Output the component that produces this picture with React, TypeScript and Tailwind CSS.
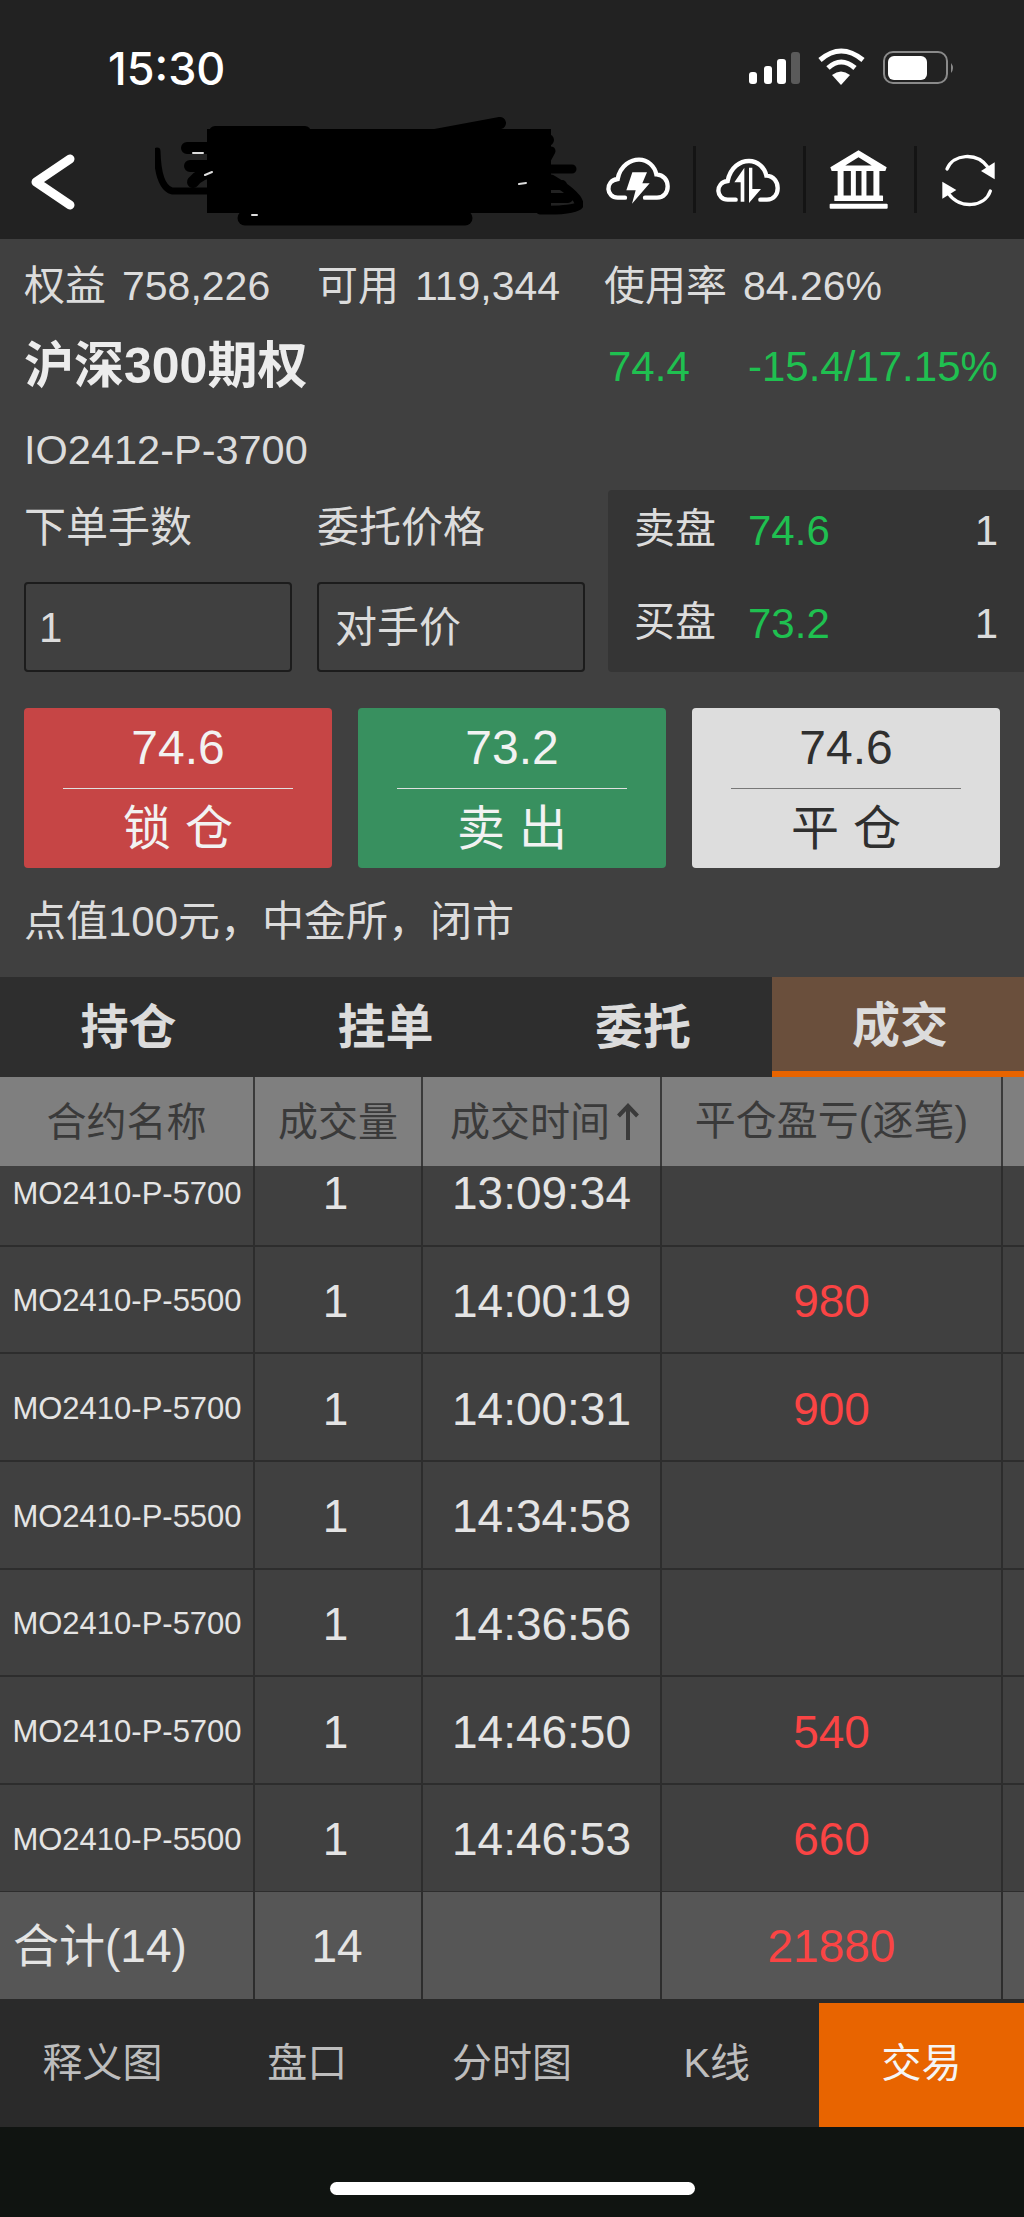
const fills = [
  { name: "MO2410-P-5700", time: "13:09:34", pnl: "" },
  { name: "MO2410-P-5500", time: "14:00:19", pnl: "980" },
  { name: "MO2410-P-5700", time: "14:00:31", pnl: "900" },
  { name: "MO2410-P-5500", time: "14:34:58", pnl: "" },
  { name: "MO2410-P-5700", time: "14:36:56", pnl: "" },
  { name: "MO2410-P-5700", time: "14:46:50", pnl: "540" },
  { name: "MO2410-P-5500", time: "14:46:53", pnl: "660" },
];

const tabs = ["持仓", "挂单", "委托", "成交"];
const navItems = ["释义图", "盘口", "分时图", "K线"];
const cols = "grid grid-cols-[255px_168px_239px_341px_21px]";

function StatusIcons() {
  return (
    <svg viewBox="745 48 215 40" className="h-[40px] w-[215px]" fill="#fff">
      <rect x="749" y="72" width="8" height="12" rx="3" />
      <rect x="764" y="66" width="8" height="18" rx="3" />
      <rect x="777" y="59" width="9" height="25" rx="3" />
      <rect x="791" y="52" width="9" height="32" rx="3" fill="#5a5a5a" />
      <path d="M820 60 Q841 42 863 60" fill="none" stroke="#fff" strokeWidth="5" />
      <path d="M828 68 Q841 56 855 68" fill="none" stroke="#fff" strokeWidth="5" />
      <path d="M841 85 L832 75 Q841 68 850 75 Z" />
      <rect x="884" y="52" width="63" height="31" rx="9" fill="none" stroke="#8a8a8a" strokeWidth="2" />
      <rect x="888" y="56" width="39" height="24" rx="6" />
      <path d="M951 63 Q955 68 951 73 Z" fill="#8a8a8a" />
    </svg>
  );
}

function Scribble() {
  return (
    <svg viewBox="155 114 428 130" className="h-[130px] w-[428px]" fill="none" stroke="#000" strokeLinecap="round" strokeLinejoin="round">
      <path d="M157 150 Q158 186 172 190 H212" strokeWidth="7" />
      <path d="M187 147 H212 M190 165 H212 M193 181 Q200 172 215 170" strokeWidth="12" />
      <path d="M215 131 H305 M430 135 L500 122 M500 139 H548" strokeWidth="12" />
      <rect x="207" y="128" width="344" height="84" fill="#000" stroke="none" />
      <path d="M551 150 L540 170 M551 168 H572" strokeWidth="9" />
      <path d="M551 178 Q580 195 579 204 Q575 210 540 209" strokeWidth="9" />
      <path d="M535 184 H562 M530 197 H568" strokeWidth="10" />
      <path d="M245 217 H465" strokeWidth="15" />
      <path d="M193 152 H203 M205 174 L212 171 M252 214 H257 M519 183 L526 182" stroke="#ddd" strokeWidth="2" />
    </svg>
  );
}

function CloudBolt() {
  return (
    <svg viewBox="40 70 210 150" className="h-[50px] w-[70px] shrink-0">
      <path d="M106 198 H84 C50 198 44 148 84 142 C92 100 125 84 148 84 C175 84 195 104 200 128 C245 130 245 198 202 198 H166" fill="none" stroke="#fff" strokeWidth="13" strokeLinecap="round" />
      <path d="M128 122 H172 L158 155 H180 L127 216 L138 176 H110 Z" fill="#fff" />
    </svg>
  );
}

function CloudArrows() {
  return (
    <svg viewBox="370 70 210 150" className="h-[50px] w-[70px] shrink-0">
      <path d="M438 204 H414 C380 204 374 154 414 148 C422 106 452 88 478 88 C505 88 525 108 530 132 C575 134 575 204 532 204 H512" fill="none" stroke="#fff" strokeWidth="13" strokeLinecap="round" />
      <path d="M464 108 V210 H453 V152 H434 Z" fill="#fff" />
      <path d="M478 108 H488 V172 H514 L478 214 Z" fill="#fff" />
    </svg>
  );
}

function Bank() {
  return (
    <svg viewBox="710 50 190 190" className="h-[63px] w-[63px] shrink-0" fill="#fff">
      <path fillRule="evenodd" d="M805 57 L890 108 L886 119 H724 L720 108 Z M805 78 L765 103 H845 Z" />
      <rect x="742" y="119" width="18" height="76" />
      <rect x="782" y="119" width="15" height="76" />
      <rect x="814" y="119" width="15" height="76" />
      <rect x="850" y="119" width="18" height="76" />
      <rect x="732" y="193" width="147" height="17" rx="2" />
      <rect x="718" y="218" width="175" height="15" rx="3" />
    </svg>
  );
}

function Refresh() {
  return (
    <svg viewBox="1045 55 180 180" className="h-[60px] w-[60px] shrink-0" fill="#fff">
      <path d="M1072 112 C1090 68 1160 58 1196 108" fill="none" stroke="#fff" strokeWidth="10" strokeLinecap="round" />
      <path d="M1215 92 V143 L1174 118 Z" />
      <path d="M1202 178 C1185 228 1110 232 1078 188" fill="none" stroke="#fff" strokeWidth="10" strokeLinecap="round" />
      <path d="M1058 150 V201 L1100 175 Z" />
    </svg>
  );
}

function Divider() {
  return <div className="h-[67px] w-[3px] shrink-0 bg-[#141414]" />;
}

function TradeButton({ price, label, tone }: { price: string; label: string; tone: string }) {
  const isLight = tone === "light";
  return (
    <div
      className={
        tone === "red"
          ? "flex h-[160px] w-[308px] flex-col rounded-[4px] bg-[#c64545] text-[#f2f2f2]"
          : tone === "green"
            ? "flex h-[160px] w-[308px] flex-col rounded-[4px] bg-[#38905f] text-[#f2f2f2]"
            : "flex h-[160px] w-[308px] flex-col rounded-[4px] bg-[#dddddd] text-[#2f2f2f]"
      }
    >
      <div className="flex h-[80px] items-center justify-center text-[48px]">{price}</div>
      <div className={isLight ? "mx-[39px] h-px bg-[#777]" : "mx-[39px] h-px bg-[#e0e0e0]"} />
      <div className="flex h-[79px] items-center justify-center gap-[14px] text-[48px]">
        <span>{label[0]}</span>
        <span>{label[1]}</span>
      </div>
    </div>
  );
}

export default function App() {
  return (
    <div className="flex h-[2217px] w-[1024px] flex-col overflow-hidden bg-[#404040] font-['Liberation_Sans','Noto_Sans_CJK_SC',sans-serif] text-[#dcdcdc]">
      <header className="h-[239px] shrink-0 bg-[#222222]">
        <div className="flex h-[104px] items-center justify-between pt-[32px] pl-[108px] pr-[64px]">
          <span className="font-['Inter',sans-serif] text-[45px] leading-none font-medium text-white">15:30</span>
          <StatusIcons />
        </div>
        <div className="flex h-[135px] items-center pt-[16px] pl-[24px]">
          <svg viewBox="24 140 56 80" className="h-[80px] w-[56px] shrink-0" fill="none" stroke="#fff" strokeWidth="9" strokeLinecap="round" strokeLinejoin="round">
            <polyline points="70,159 36,182 70,205" />
          </svg>
          <div className="ml-[75px] shrink-0">
            <Scribble />
          </div>
          <div className="ml-[20px]"><CloudBolt /></div>
          <div className="ml-[20px]"><Divider /></div>
          <div className="ml-[17px]"><CloudArrows /></div>
          <div className="ml-[20px]"><Divider /></div>
          <div className="ml-[21px]"><Bank /></div>
          <div className="ml-[24px]"><Divider /></div>
          <div className="ml-[21px]"><Refresh /></div>
        </div>
      </header>

      <section className="h-[738px] shrink-0 pt-[23px]">
        <div className="grid h-[48px] grid-cols-[293px_287px_1fr] items-center pl-[24px] text-[41px] leading-[48px]">
          <div className="flex gap-[16px]"><span>权益</span><span>758,226</span></div>
          <div className="flex gap-[16px]"><span>可用</span><span>119,344</span></div>
          <div className="flex gap-[16px]"><span>使用率</span><span>84.26%</span></div>
        </div>
        <div className="mt-[26px] flex h-[60px] items-center pl-[24px]">
          <span className="w-[584px] text-[50px] font-bold text-[#ececec]">沪深300期权</span>
          <span className="w-[140px] text-[42px] text-[#1fc050]">74.4</span>
          <span className="text-[42px] text-[#1fc050]">-15.4/17.15%</span>
        </div>
        <div className="mt-[30px] flex h-[48px] items-center pl-[24px] text-[41.5px]">IO2412-P-3700</div>

        <div className="mt-[16px] flex h-[182px]">
          <div className="w-[608px] pl-[24px]">
            <div className="box-content grid h-[48px] grid-cols-[293px_1fr] items-center pt-[14px] text-[42px] leading-[48px]">
              <span>下单手数</span>
              <span>委托价格</span>
            </div>
            <div className="mt-[30px] grid grid-cols-[293px_1fr]">
              <div className="flex h-[90px] w-[268px] items-center rounded-[4px] border-2 border-[#1c1c1c] pl-[13px] text-[42px]">1</div>
              <div className="flex h-[90px] w-[268px] items-center rounded-[4px] border-2 border-[#1c1c1c] pl-[16px] text-[42px]">对手价</div>
            </div>
          </div>
          <div className="w-[416px] rounded-l-[4px] bg-[#353535] pt-[16px] pl-[26px] pr-[26px] text-[42px]">
            <div className="flex h-[48px] items-center">
              <span className="w-[114px] text-[41px]">卖盘</span>
              <span className="flex-1 text-[#1fc050]">74.6</span>
              <span>1</span>
            </div>
            <div className="mt-[45px] flex h-[48px] items-center">
              <span className="w-[114px] text-[41px]">买盘</span>
              <span className="flex-1 text-[#1fc050]">73.2</span>
              <span>1</span>
            </div>
          </div>
        </div>

        <div className="mt-[36px] flex gap-[26px] pl-[24px]">
          <TradeButton price="74.6" label="锁仓" tone="red" />
          <TradeButton price="73.2" label="卖出" tone="green" />
          <TradeButton price="74.6" label="平仓" tone="light" />
        </div>

        <div className="mt-[29px] flex h-[48px] items-center pl-[24px] text-[42px]">点值100元，中金所，闭市</div>
      </section>

      <nav className="grid h-[100px] shrink-0 grid-cols-[257px_257px_258px_252px] bg-[#2e2e2e] text-[48px] font-bold">
        {tabs.map((tab, i) =>
          i === 3 ? (
            <div key={tab} className="flex items-center justify-center border-b-[6px] border-[#e86400] bg-[#6a4f3c] pt-[4px] pl-[4px]">
              {tab}
            </div>
          ) : (
            <div key={tab} className="flex items-center justify-center pt-[2px]">
              {tab}
            </div>
          ),
        )}
      </nav>

      <div className={`${cols} h-[89px] shrink-0 bg-[#7f7f7f] text-[40px] text-[#3a3a3a]`}>
        <div className="flex items-center justify-center border-r-2 border-[#3a3a3a]">合约名称</div>
        <div className="flex items-center justify-center border-r-2 border-[#3a3a3a]">成交量</div>
        <div className="flex items-center justify-center border-r-2 border-[#3a3a3a] pl-[6px]">
          成交时间
          <svg viewBox="0 0 22 37" className="ml-[7px] h-[37px] w-[22px]" fill="none" stroke="#3a3a3a" strokeWidth="4">
            <path d="M11 37 V3 M1.5 13 L11 3 L20.5 13" />
          </svg>
        </div>
        <div className="flex items-center justify-center border-r-2 border-[#3a3a3a] text-[41px]">平仓盈亏(逐笔)</div>
        <div />
      </div>

      <div className="h-[726px] shrink-0 overflow-hidden">
        <div className="-mt-[27px]">
          {fills.map((row) => (
            <div key={row.time} className={`${cols} h-[107.7px] border-b-2 border-[#2d2d2d] text-[46px] text-[#e4e4e4]`}>
              <div className="flex items-center justify-center border-r-2 border-[#2d2d2d] pt-[4px] pl-[1px] text-[31px]">{row.name}</div>
              <div className="flex items-center justify-center border-r-2 border-[#2d2d2d] pt-[4px] pr-[5px]">1</div>
              <div className="flex items-center justify-center border-r-2 border-[#2d2d2d] pt-[4px]">{row.time}</div>
              <div className="flex items-center justify-center border-r-2 border-[#2d2d2d] pt-[4px] text-[#fa4444]">{row.pnl}</div>
              <div />
            </div>
          ))}
        </div>
      </div>

      <div className={`${cols} h-[107px] shrink-0 bg-[#565656] text-[46px] text-[#e4e4e4]`}>
        <div className="flex items-center border-r-2 border-[#2d2d2d] pl-[13px] pt-[2px]">合计(14)</div>
        <div className="flex items-center justify-center border-r-2 border-[#2d2d2d] pt-[2px] pr-[2px]">14</div>
        <div className="border-r-2 border-[#2d2d2d]" />
        <div className="flex items-center justify-center border-r-2 border-[#2d2d2d] pt-[2px] text-[#fa4444]">21880</div>
        <div />
      </div>

      <div className="grid h-[128px] shrink-0 grid-cols-5 bg-[#2a2a2a] text-[40px] text-[#bdbdbd]">
        {navItems.map((item) => (
          <div key={item} className="flex items-center justify-center">
            {item}
          </div>
        ))}
        <div className="mt-[4px] flex items-center justify-center bg-[#e86400] pb-[4px] text-[#f5f5f5]">交易</div>
      </div>

      <div className="flex flex-1 justify-center bg-[#101411] pt-[55px]">
        <div className="h-[13px] w-[365px] rounded-full bg-white" />
      </div>
    </div>
  );
}
